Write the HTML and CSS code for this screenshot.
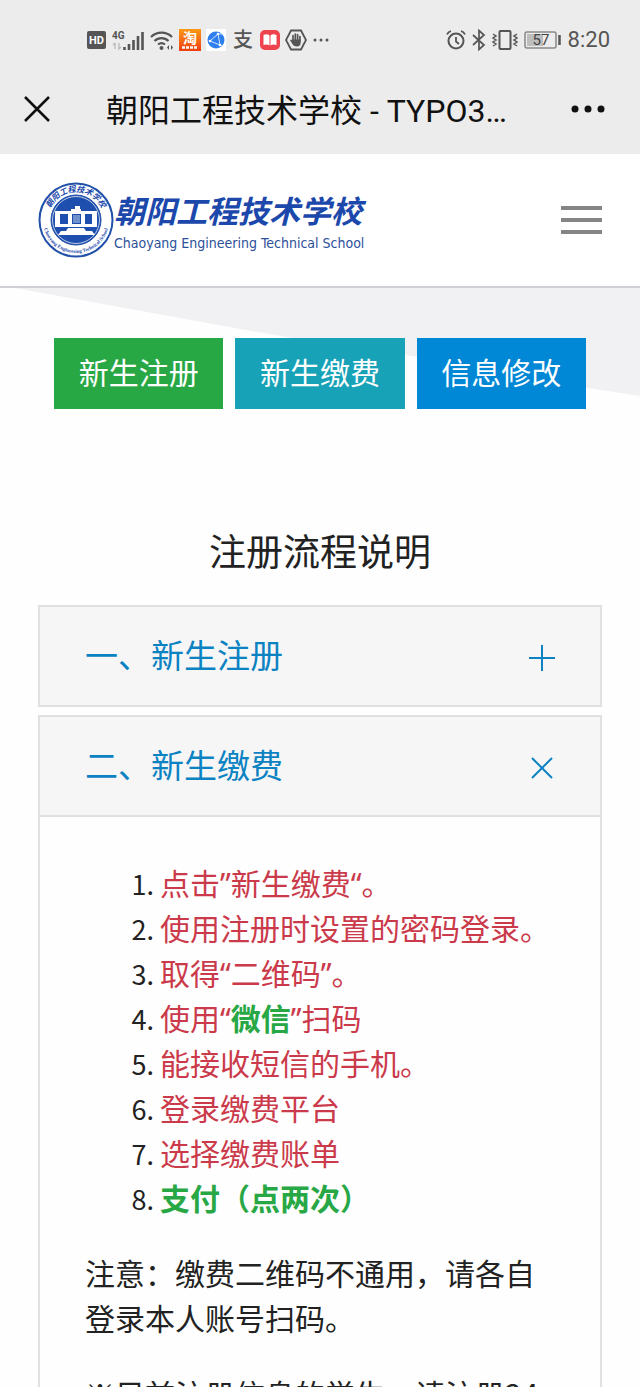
FILE: index.html
```
<!DOCTYPE html>
<html lang="zh-CN">
<head>
    <meta charset="UTF-8">
    <meta name="viewport" content="width=device-width, initial-scale=1.0">
    <title>朝阳工程技术学校 - TYPO3</title>
    <link rel="stylesheet" href="styles.css">
</head>
<body>

<div class="page">
    <div class="status-bar">
        <div class="status-left">
            <svg width="20" height="20" viewBox="0 0 20 20"><rect y="1" width="19" height="18" rx="2" fill="#555"/><text x="9.5" y="14" class="hd">HD</text></svg>
            <svg width="33" height="24" viewBox="0 0 33 24">
                <text x="0" y="11" class="net">4G</text>
                <path d="M3 15v6M1 17l2-2M7 15v6l2-2" stroke="#bbb" stroke-width="1.3" fill="none"/>
                <path d="M12.500 22v-3M17 22v-6M21.500 22v-10M26 22V8M30.500 22V4" stroke="#555" stroke-width="2.600"/>
            </svg>
            <svg width="24" height="22" viewBox="0 0 24 22">
                <path d="M1 8a15 15 0 0 1 21 0M4.500 12a10 10 0 0 1 14 0M8 15.500a5.500 5.500 0 0 1 7 0" stroke="#555" stroke-width="2.200" fill="none"/>
                <circle cx="11.500" cy="19" r="2" fill="#555"/>
                <path d="M19 16l-2 2.500 2 2.500zM21 16l2 2.500-2 2.500z" fill="#555"/>
            </svg>
            <svg class="app" width="22" height="22" viewBox="0 0 22 22">
                <defs><linearGradient id="tao" x2="0" y2="1"><stop offset="0" stop-color="#fb9a16"/><stop offset="1" stop-color="#ee3d10"/></linearGradient></defs>
                <rect width="22" height="22" fill="url(#tao)"/>
                <text x="11" y="14" class="tao">淘</text>
                <path d="M3 18.500h16" stroke="#fff" stroke-width="2.500" stroke-dasharray="3 1"/>
            </svg>
            <svg width="20" height="22" viewBox="0 0 20 22">
                <rect width="20" height="22" fill="#fff"/>
                <circle cx="10" cy="11" r="8.500" fill="#2d7ff0"/>
                <path d="M4 12l8-7 2 11zM12 5l4 0M14 16l2 1" stroke="#cfe2ff" fill="none"/>
                <circle cx="4" cy="12" r="1.300" fill="#fff"/><circle cx="12" cy="5" r="1.300" fill="#fff"/><circle cx="14" cy="16" r="1.300" fill="#fff"/>
            </svg>
            <span class="zhi">支</span>
            <svg width="20" height="20" viewBox="0 0 20 20">
                <rect width="20" height="20" rx="5" fill="#ee434e"/>
                <path d="M3.500 5q4-1.500 6 .5v10q-2-1.500-6-.5zM16.500 5q-4-1.500-6 .5v10q2-1.500 6-.5z" fill="#fff"/>
            </svg>
            <svg width="22" height="22" viewBox="0 0 22 22">
                <path d="M6 1.500h10l5 9.500-5 9.500H6L1 11z" stroke="#555" stroke-width="1.800" fill="none"/>
                <path d="M8 12V6.500M10.300 11V5M12.600 11V5.500M14.900 12V7.500M6 11.500l3 4" stroke="#555" stroke-width="1.700" stroke-linecap="round"/>
                <path d="M7.200 10.500h8.500v3q0 4-4 4-3 0-4.500-3z" fill="#555"/>
            </svg>
            <svg width="18" height="20" viewBox="0 0 18 20"><g fill="#555"><circle cx="3" cy="10" r="1.500"/><circle cx="9" cy="10" r="1.500"/><circle cx="15" cy="10" r="1.500"/></g></svg>
        </div>
        <div class="status-right">
            <svg width="20" height="22" viewBox="0 0 20 22">
                <circle cx="10" cy="12" r="7.500" stroke="#555" stroke-width="2" fill="none"/>
                <path d="M10 8v4.500l3 2.500M1 5.500Q2 3 5 2M19 5.500Q18 3 15 2" stroke="#555" stroke-width="1.800" fill="none"/>
            </svg>
            <svg width="14" height="22" viewBox="0 0 14 22"><path d="M1 6l11 10-5 4.500v-19L12 6 1 16" stroke="#555" stroke-width="1.700" fill="none"/></svg>
            <svg width="26" height="22" viewBox="0 0 26 22">
                <rect x="7.500" y="2" width="11" height="18" rx="1" stroke="#555" stroke-width="2" fill="none"/>
                <path d="M1 5l3 2-3 2 3 2-3 2 3 2-3 2M25 5l-3 2 3 2-3 2 3 2-3 2 3 2" stroke="#555" stroke-width="1.500" fill="none"/>
            </svg>
            <svg width="38" height="18" viewBox="0 0 38 18">
                <rect x="1" y="1" width="31" height="16" rx="2" stroke="#888" stroke-width="1.500" fill="none"/>
                <rect x="3" y="3" width="16" height="12" fill="#bdbdbd"/>
                <path d="M35.500 4v10" stroke="#555" stroke-width="2.500"/>
                <text x="17" y="14" class="battery">57</text>
            </svg>
            <span class="time">8:20</span>
        </div>
    </div>

    <div class="title-bar">
        <button aria-label="关闭">
            <svg width="28" height="28" viewBox="0 0 28 28"><path d="M2 2l24 24M26 2L2 26" stroke="#111" stroke-width="2.500"/></svg>
        </button>
        <div class="title">朝阳工程技术学校 - TYPO3…</div>
        <button aria-label="更多">
            <svg width="34" height="10" viewBox="0 0 34 10"><g fill="#111"><circle cx="4" cy="5" r="3.500"/><circle cx="17" cy="5" r="3.500"/><circle cx="30" cy="5" r="3.500"/></g></svg>
        </button>
    </div>

    <header class="site-header">
        <a class="logo" href="#">
            <svg width="76" height="76" viewBox="0 0 76 76">
                <defs>
                    <path id="arc-top" d="M10 38a28 28 0 0 1 56 0"/>
                    <path id="arc-bottom" d="M5 38a33 33 0 0 0 66 0"/>
                </defs>
                <circle cx="38" cy="38" r="36.500" fill="#fff" stroke="#2150a8" stroke-width="2"/>
                <circle cx="38" cy="38" r="25" fill="#1e4fae" stroke="#2150a8"/>
                <circle cx="38" cy="38" r="23.500" fill="none" stroke="#fff" stroke-width=".7"/>
                <text class="seal-cn"><textPath href="#arc-top" startOffset="50%">朝阳工程技术学校</textPath></text>
                <text class="seal-en"><textPath href="#arc-bottom" startOffset="50%">Chaoyang Engineering Technical School</textPath></text>
                <g fill="#fff">
                    <path d="M17 29h16v-2h4v-3h5v3h1v2h16v3H17z"/>
                    <path d="M17 32h5v12h-5zM54 32h5v12h-5zM30 32h4v12h-4zM43 32h4v12h-4zM17 42h42v3H17z"/>
                    <path d="M30 46h16l2 3h6l3 4H20l3-4h5z"/>
                </g>
                <rect x="35" y="33" width="7" height="8" fill="#6f91cc"/>
            </svg>
            <span class="logo-text">
                <span class="logo-cn">朝阳工程技术学校</span>
                <span class="logo-en">Chaoyang Engineering Technical School</span>
            </span>
        </a>
        <button class="menu-button" aria-label="菜单">
            <span></span>
            <span></span>
            <span></span>
        </button>
    </header>

    <main class="content">
        <svg class="slope" viewBox="0 0 640 110" preserveAspectRatio="none"><path d="M15 0L224 38L292 50L412 68L588 100L640 108V0z" fill="#f1f1f4"/></svg>
        <nav class="actions">
            <a class="btn green" href="#">新生注册</a>
            <a class="btn teal" href="#">新生缴费</a>
            <a class="btn blue" href="#">信息修改</a>
        </nav>

        <h1>注册流程说明</h1>

        <section class="panel">
            <button class="panel-head" aria-expanded="false">
                <span>一、新生注册</span>
                <svg width="28" height="28" viewBox="0 0 28 28"><path d="M14 1v26M1 14h26" stroke="#0b82c2" stroke-width="2"/></svg>
            </button>
        </section>

        <section class="panel">
            <button class="panel-head" aria-expanded="true">
                <span>二、新生缴费</span>
                <svg width="28" height="28" viewBox="0 0 28 28"><path d="M4 4l20 20M24 4L4 24" stroke="#0b82c2" stroke-width="2"/></svg>
            </button>
            <div class="panel-body">
                <ol>
                    <li><span>点击”新生缴费“。</span></li>
                    <li><span>使用注册时设置的密码登录。</span></li>
                    <li><span>取得“二维码”。</span></li>
                    <li><span>使用“<strong>微信</strong>”扫码</span></li>
                    <li><span>能接收短信的手机。</span></li>
                    <li><span>登录缴费平台</span></li>
                    <li><span>选择缴费账单</span></li>
                    <li><strong>支付（点两次）</strong></li>
                </ol>
                <p>注意：缴费二维码不通用，请各自登录本人账号扫码。</p>
                <p class="note">※目前注册信息的学生，请注册24</p>
            </div>
        </section>
    </main>
</div>

</body>
</html>
```
FILE: styles.css
```
* {
    box-sizing: border-box;
}
body {
    margin: 0;
    background-color: #fefefe;
    color: #222;
    font-family: 'Noto Sans', 'Noto Sans CJK SC', sans-serif;
}
button {
    border: none;
    background: none;
    padding: 0;
    font: inherit;
    color: inherit;
}
a {
    color: inherit;
    text-decoration: none;
}
svg {
    display: block;
    flex-shrink: 0;
}
.page {
    height: 100vh;
    overflow: hidden;
}

/* phone status bar */
.status-bar {
    display: flex;
    justify-content: space-between;
    align-items: center;
    height: 64px;
    padding: 16px 30px 0 87px;
    background-color: #ececec;
    color: #555;
}
.status-left, .status-right {
    display: flex;
    align-items: center;
    gap: 5px;
}
.status-right {
    gap: 6px;
}
.hd {
    font: bold 11px Roboto, sans-serif;
    fill: #fff;
    text-anchor: middle;
}
.net {
    font: bold 10px Roboto, sans-serif;
    fill: #555;
}
.app {
    overflow: visible;
}
.tao {
    font: bold 14px 'Noto Sans CJK SC', sans-serif;
    fill: #fff;
    text-anchor: middle;
}
.battery {
    font: 15px Roboto, sans-serif;
    fill: #444;
    text-anchor: middle;
}
.zhi {
    padding: 0 2px;
    font-size: 20px;
    line-height: 22px;
    font-weight: 500;
}
.time {
    font: 22px/24px Roboto, sans-serif;
}

/* browser title bar */
.title-bar {
    display: flex;
    align-items: center;
    height: 90px;
    padding: 0 35px 0 23px;
    background-color: #ececec;
    color: #111;
}
.title {
    flex: 1;
    margin-left: 55px;
    padding-top: 4px;
    font: 32px/44px Roboto, 'Noto Sans CJK SC', sans-serif;
    white-space: nowrap;
}

.site-header {
    display: flex;
    justify-content: space-between;
    align-items: center;
    height: 134px;
    padding: 0 38px;
    background-color: #fff;
    border-bottom: 2px solid #cfd0d4;
}
.logo {
    display: flex;
    align-items: center;
    color: #1c48ab;
}
.logo-text {
    display: flex;
    flex-direction: column;
    padding-top: 2px;
}
.logo-cn {
    font-size: 31px;
    line-height: 44px;
    font-weight: bold;
    font-style: italic;
}
.logo-en {
    font: 14px/20px 'DejaVu Sans Condensed', 'DejaVu Sans', sans-serif;
    color: #2c509a;
}
.seal-cn {
    font: bold italic 8px 'Noto Sans CJK SC', sans-serif;
    fill: #1c48ab;
    text-anchor: middle;
}
.seal-en {
    font: bold 5px 'Liberation Serif', serif;
    fill: #1c48ab;
    text-anchor: middle;
}
.menu-button {
    display: flex;
    flex-direction: column;
    gap: 8px;
    width: 41px;
}
.menu-button span {
    height: 4px;
    background-color: #858585;
}

.content {
    position: relative;
    padding: 50px 38px 0;
}
/* pale wedge behind the buttons */
.slope {
    position: absolute;
    top: 0;
    left: 0;
    width: 100%;
    height: 110px;
    z-index: -1;
}
.actions {
    display: flex;
    gap: 12px;
    padding: 0 16px;
}
.btn {
    flex: 1;
    padding: 13px 0 14px;
    font-size: 30px;
    line-height: 44px;
    text-align: center;
    color: #fff;
}
.green {
    background-color: #28a745;
}
.teal {
    background-color: #17a2b8;
}
.blue {
    background-color: #0087d5;
}

h1 {
    margin: 115px 0 25px;
    font-size: 37px;
    line-height: 56px;
    font-weight: 400;
    text-align: center;
}

.panel {
    margin-bottom: 8px;
    border: 2px solid #dfe0e1;
}
.panel-head {
    display: flex;
    justify-content: space-between;
    align-items: center;
    width: 100%;
    height: 98px;
    padding: 4px 44px 0 45px;
    background-color: #f6f6f6;
    color: #0b82c2;
    font-size: 33px;
}
.panel-head span {
    padding-bottom: 8px;
}
.panel-body {
    border-top: 2px solid #dfe0e1;
    padding: 44px 45px 0;
    font-size: 30px;
    line-height: 45px;
}
.panel-body ol {
    margin: 0 0 30px;
    padding-left: 75px;
}
.panel-body li::marker {
    font-family: 'Noto Sans CJK SC', sans-serif;
    font-size: 27px;
}
.panel-body li span {
    color: #cb3a4a;
}
.panel-body li strong {
    color: #28a745;
}
.panel-body p {
    margin: 0 0 30px;
}
.panel-body .note {
    font-family: 'Noto Sans CJK SC', sans-serif;
}
```
